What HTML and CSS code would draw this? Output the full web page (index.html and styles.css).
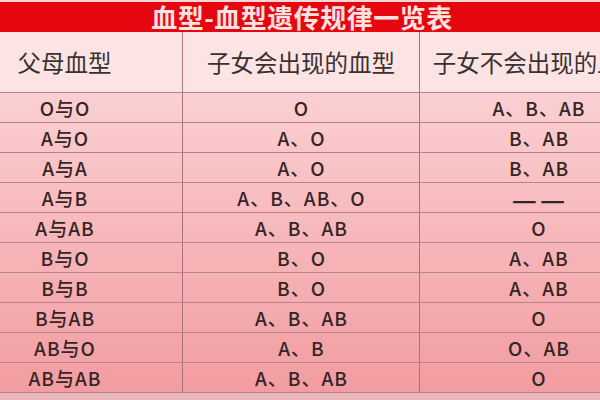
FILE: index.html
```html
<!DOCTYPE html>
<html lang="zh">
<head>
<meta charset="utf-8">
<link rel="stylesheet" href="styles.css">
</head>
<body>
<div class="sheet">
  <div class="title">血型-血型遗传规律一览表</div>
  <div class="grid head">
    <div class="cell">父母血型</div>
    <div class="cell">子女会出现的血型</div>
    <div class="cell">子女不会出现的血型</div>
  </div>
  <div class="body">
    <div class="grid row"><div class="cell">O与O</div><div class="cell">O</div><div class="cell">A、B、AB</div></div>
    <div class="grid row"><div class="cell">A与O</div><div class="cell">A、O</div><div class="cell">B、AB</div></div>
    <div class="grid row"><div class="cell">A与A</div><div class="cell">A、O</div><div class="cell">B、AB</div></div>
    <div class="grid row"><div class="cell">A与B</div><div class="cell">A、B、AB、O</div><div class="cell dash"><span>—</span><span>—</span></div></div>
    <div class="grid row"><div class="cell">A与AB</div><div class="cell">A、B、AB</div><div class="cell">O</div></div>
    <div class="grid row"><div class="cell">B与O</div><div class="cell">B、O</div><div class="cell">A、AB</div></div>
    <div class="grid row"><div class="cell">B与B</div><div class="cell">B、O</div><div class="cell">A、AB</div></div>
    <div class="grid row"><div class="cell">B与AB</div><div class="cell">A、B、AB</div><div class="cell">O</div></div>
    <div class="grid row"><div class="cell">AB与O</div><div class="cell">A、B</div><div class="cell">O、AB</div></div>
    <div class="grid row"><div class="cell">AB与AB</div><div class="cell">A、B、AB</div><div class="cell">O</div></div>
  </div>
</div>
</body>
</html>
```
FILE: styles.css
```css
html, body {
  margin: 0;
  padding: 0;
}
body {
  width: 600px;
  height: 400px;
  overflow: hidden;
  background: #e9b7b9;
  font-family: "Noto Sans CJK SC", "Noto Sans", sans-serif;
  color: #352526;
}
.sheet {
  width: 710px;
  margin-left: -53px;
  padding-top: 2px;
  background: #f6dada;
}
.title {
  height: 30px;
  line-height: 30px;
  background: #e5060f;
  color: #fde2e0;
  font-weight: 700;
  font-size: 26px;
  text-align: center;
  letter-spacing: 0.5px;
}
.grid {
  display: grid;
  grid-template-columns: 236px 237px 237px;
}
.head {
  height: 60px;
  background: #fde4e4;
  border-bottom: 1.5px solid #b98489;
  font-size: 23.5px;
  color: #3a3030;
}
.cell {
  display: flex;
  align-items: center;
  justify-content: center;
  border-right: 1.5px solid #a8747a;
}
.cell:last-child {
  border-right: none;
}
.body {
  background: linear-gradient(#fbd0d2, #f29ca1);
}
.row {
  height: 29px;
  border-bottom: 1.5px solid #b98489;
  font-size: 19px;
  font-weight: 500;
  letter-spacing: 1px;
  text-indent: 1px;
}
.dash {
  gap: 3px;
  font-size: 28px;
  line-height: 1;
  letter-spacing: 0;
  text-indent: 0;
  font-weight: 500;
}
```
